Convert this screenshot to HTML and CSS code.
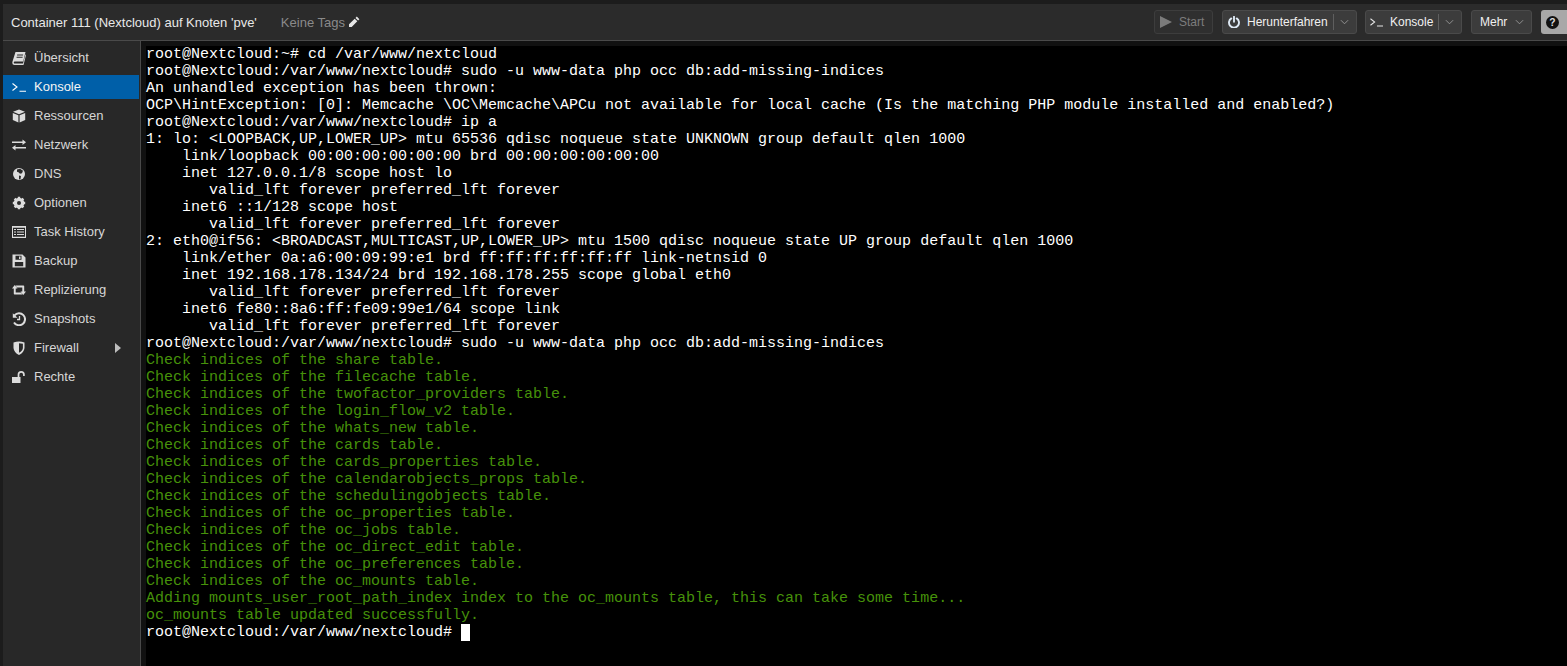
FILE: index.html
```html
<!DOCTYPE html>
<html lang="de">
<head>
<meta charset="utf-8">
<title>Container 111 (Nextcloud)</title>
<link rel="stylesheet" href="styles.css">
</head>
<body>
<div class="app">
  <header class="top">
    <span class="title">Container 111 (Nextcloud) auf Knoten 'pve'</span>
    <span class="tags">Keine Tags</span>
    <svg class="pencil" viewBox="0 0 12 12"><path d="M8.800.6l2.600 2.600-1.300 1.300-2.600-2.600zM6.700 2.700l2.600 2.600-5.600 5.600H1V8.300z" fill="#e6e6e6"/></svg>
    <div class="spacer"></div>
    <button class="btn start"><svg class="ic" viewBox="0 0 12 12"><path d="M0 0l12 6-12 6z" fill="#7b7b7b"/></svg><span>Start</span></button>
    <button class="btn power"><svg class="ic" viewBox="0 0 12 12"><path d="M3.300 2.400a5 5 0 1 0 5.400 0M6 .8v5" fill="none" stroke="#dfeaf5" stroke-width="1.900" stroke-linecap="round"/></svg><span>Herunterfahren</span><i class="sep"></i><svg class="chev" viewBox="0 0 10 6"><path d="M1 1l4 4 4-4" fill="none" stroke="#9a9a9a" stroke-width="1"/></svg></button>
    <button class="btn konsole"><svg class="ic wide" viewBox="0 0 14 10"><path d="M.5 1.500L5 5 .5 8.500M7.500 9.200h6.500" fill="none" stroke="#e6e6e6" stroke-width="1.100"/></svg><span>Konsole</span><i class="sep"></i><svg class="chev" viewBox="0 0 10 6"><path d="M1 1l4 4 4-4" fill="none" stroke="#9a9a9a" stroke-width="1"/></svg></button>
    <button class="btn mehr"><span>Mehr</span><svg class="chev" viewBox="0 0 10 6"><path d="M1 1l4 4 4-4" fill="none" stroke="#9a9a9a" stroke-width="1"/></svg></button>
    <button class="help"><svg viewBox="0 0 12 12"><circle cx="6" cy="6" r="6" fill="#111"/><text x="6" y="9.300" class="q">?</text></svg></button>
  </header>
  <div class="main">
    <nav class="side">
      <a class="item"><svg viewBox="0 0 14 14"><path fill-rule="evenodd" d="M3.500 1H13.500l-2.300 9.500H2.500a1.300 1.300 0 0 0-.3 2h8.800l2.500-9.200.5.800L11.500 14H2.500Q-.3 14 .5 10.500zM5.200 3.500l-.2 1h6l.2-1zM4.700 5.700l-.2 1h6l.2-1z" fill="#dcdcdc"/></svg><span>Übersicht</span></a>
      <a class="item active"><svg viewBox="0 0 14 10"><path d="M.5 1.500L5 5 .5 8.500M7.500 9.200h6.500" fill="none" stroke="#fff" stroke-width="1.100"/></svg><span>Konsole</span></a>
      <a class="item"><svg viewBox="0 0 14 14"><path d="M7 .5l6 2.300L7 5.200 1 2.800zM.8 4l5.600 2.300v7.200L.8 11zM13.200 4L7.600 6.300v7.200l5.600-2.500z" fill="#dcdcdc"/></svg><span>Ressourcen</span></a>
      <a class="item"><svg viewBox="0 0 14 12"><path d="M0 2.500h10.500V.5L14 3.200 10.500 6V4H0zM14 8H3.500V6L0 8.800l3.500 2.700v-2H14z" fill="#dcdcdc"/></svg><span>Netzwerk</span></a>
      <a class="item"><svg viewBox="0 0 14 14"><circle cx="7" cy="7" r="6" fill="#dcdcdc"/><path d="M5 2.500l3-.8 3 2-1 2.500-2 .5-1.500-1.500-1.500-.5zM7 8.500l2 .5-.5 3-1.500.5z" fill="#2a2a2a"/></svg><span>DNS</span></a>
      <a class="item"><svg viewBox="0 0 14 14"><circle cx="7" cy="7" r="3.800" fill="none" stroke="#dcdcdc" stroke-width="3"/><path d="M7 7V.8M7 7l4.400-4.400M7 7h6.200M7 7l4.400 4.400M7 7v6.200M7 7l-4.400 4.400M7 7H.8M7 7L2.600 2.600" stroke="#dcdcdc" stroke-width="2.400"/><circle cx="7" cy="7" r="2" fill="#2a2a2a"/></svg><span>Optionen</span></a>
      <a class="item"><svg viewBox="0 0 14 12"><path fill-rule="evenodd" d="M0 0h14v12H0zM1 1.800v9h12v-9zM2 3h2v1H2zM5 3h7v1H5zM2 5.500h2v1H2zM5 5.500h7v1H5zM2 8h2v1H2zM5 8h7v1H5z" fill="#dcdcdc"/></svg><span>Task History</span></a>
      <a class="item"><svg viewBox="0 0 14 14"><path fill-rule="evenodd" d="M.5.5h10l3 3v10H.5zM3.500 1.800v4h6v-4zM7 2.500h1.500v2.500H7zM2.800 8v4.200h8.400V8z" fill="#dcdcdc"/></svg><span>Backup</span></a>
      <a class="item"><svg viewBox="0 0 14 12"><path d="M2.750 1l2.750 3.500H3.700V8.500H9l1.500 2H2.500q-.7 0-.7-.7V4.500H0zM11.250 11L8.500 7.500h1.800V3.500H5L3.500 1.500h8q.7 0 .7.700V7.500H14z" fill="#dcdcdc"/></svg><span>Replizierung</span></a>
      <a class="item"><svg viewBox="0 0 14 14"><path d="M2.500 3.300A6 6 0 1 1 2 10.500" fill="none" stroke="#dcdcdc" stroke-width="2"/><path d="M.8 1.200L5.500 5.800H.8z" fill="#dcdcdc"/><path d="M7.500 4v3.500H5" fill="none" stroke="#dcdcdc" stroke-width="1.300"/></svg><span>Snapshots</span></a>
      <a class="item"><svg viewBox="0 0 14 14"><path fill-rule="evenodd" d="M1.500 1.500Q7-.5 12.500 1.500V7Q12 11.500 7 14 2 11.500 1.500 7zM7 2.300v9.500Q10.800 9.800 10.900 7V2.800Q9 2.300 7 2.300z" fill="#dcdcdc"/></svg><span>Firewall</span><svg class="arrow" viewBox="0 0 6 10"><path d="M0 0l6 5-6 5z" fill="#bdbdbd"/></svg></a>
      <a class="item"><svg viewBox="0 0 14 12"><path d="M0 6h8.500v6H0z" fill="#dcdcdc"/><path d="M6.500 6V3.500a2.700 2.700 0 0 1 5.400 0V5" fill="none" stroke="#dcdcdc" stroke-width="1.700"/></svg><span>Rechte</span></a>
    </nav>
    <section class="term"><pre class="screen">root@Nextcloud:~# cd /var/www/nextcloud
root@Nextcloud:/var/www/nextcloud# sudo -u www-data php occ db:add-missing-indices
An unhandled exception has been thrown:
OCP\HintException: [0]: Memcache \OC\Memcache\APCu not available for local cache (Is the matching PHP module installed and enabled?)
root@Nextcloud:/var/www/nextcloud# ip a
1: lo: &lt;LOOPBACK,UP,LOWER_UP&gt; mtu 65536 qdisc noqueue state UNKNOWN group default qlen 1000
    link/loopback 00:00:00:00:00:00 brd 00:00:00:00:00:00
    inet 127.0.0.1/8 scope host lo
       valid_lft forever preferred_lft forever
    inet6 ::1/128 scope host
       valid_lft forever preferred_lft forever
2: eth0@if56: &lt;BROADCAST,MULTICAST,UP,LOWER_UP&gt; mtu 1500 qdisc noqueue state UP group default qlen 1000
    link/ether 0a:a6:00:09:99:e1 brd ff:ff:ff:ff:ff:ff link-netnsid 0
    inet 192.168.178.134/24 brd 192.168.178.255 scope global eth0
       valid_lft forever preferred_lft forever
    inet6 fe80::8a6:ff:fe09:99e1/64 scope link
       valid_lft forever preferred_lft forever
root@Nextcloud:/var/www/nextcloud# sudo -u www-data php occ db:add-missing-indices
<span class="g">Check indices of the share table.
Check indices of the filecache table.
Check indices of the twofactor_providers table.
Check indices of the login_flow_v2 table.
Check indices of the whats_new table.
Check indices of the cards table.
Check indices of the cards_properties table.
Check indices of the calendarobjects_props table.
Check indices of the schedulingobjects table.
Check indices of the oc_properties table.
Check indices of the oc_jobs table.
Check indices of the oc_direct_edit table.
Check indices of the oc_preferences table.
Check indices of the oc_mounts table.
Adding mounts_user_root_path_index index to the oc_mounts table, this can take some time...
oc_mounts table updated successfully.
</span>root@Nextcloud:/var/www/nextcloud# <span class="cursor"> </span></pre></section>
  </div>
</div>
</body>
</html>
```
FILE: styles.css
```css
* { box-sizing: border-box; }
html, body { margin: 0; height: 100%; overflow: hidden; background: #1c1c1c; }
body { font-family: "Liberation Sans", Arial, sans-serif; font-size: 13px; color: #e0e0e0; }
.app { height: 666px; padding: 4px 0 0 3px; display: flex; flex-direction: column; }
.top { height: 37px; flex: none; display: flex; align-items: center; padding: 0 0 0 8px; background: #2b2b2b; border-bottom: 1px solid #4a4a4a; overflow: hidden; }
.title { font-size: 13px; color: #e8e8e8; }
.tags { margin-left: 24px; color: #8a8a8a; }
.pencil { width: 12px; height: 12px; margin-left: 3px; }
.spacer { flex: 1; }
.btn { height: 24px; margin: 0 9px 0 0; display: flex; align-items: center; flex: none; background: #3c3c3c; border: 1px solid #4a4a4a; border-radius: 3px; color: #f0f0f0; font: 12px "Liberation Sans", Arial, sans-serif; }
.start { width: 59px; padding: 0 0 0 5px; background: #2f2f2f; border-color: #3d3d3d; color: #7d7d7d; }
.power { width: 135px; padding: 0 0 0 5px; margin-right: 8px; }
.konsole { width: 97px; padding: 0 0 0 4px; }
.mehr { width: 61px; padding: 0 0 0 8px; }
.mehr .chev { margin-left: 8px; }
.ic { width: 12px; height: 12px; margin-right: 7px; flex: none; }
.ic.wide { width: 13px; height: 10px; margin-right: 7px; }
.sep { width: 1px; height: 16px; background: #5f5f5f; margin: 0 6px 0 5px; flex: none; }
.chev { width: 9px; height: 6px; flex: none; }
.help { width: 26px; height: 24px; flex: none; padding: 0 0 0 5px; display: flex; align-items: center; background: #a8a8a8; border: 0; border-radius: 3px 0 0 3px; }
.help svg { width: 13px; height: 13px; }
.q { font: bold 9.500px "Liberation Sans", sans-serif; fill: #ddd; text-anchor: middle; }
.main { flex: 1; display: flex; min-height: 0; }
.side { width: 138px; flex: none; padding-top: 5px; background: #282828; border-right: 1px solid #4a4a4a; display: flex; flex-direction: column; }
.item { height: 24px; margin-bottom: 5px; padding-left: 9px; display: flex; align-items: center; color: #d6d6d6; font-size: 13px; }
.item span { margin-bottom: 2px; }
.item svg:first-child { width: 14px; height: 14px; flex: none; margin-right: 8px; }
.item.active { background: #005fa8; color: #f4f4f4; margin-right: 1px; }
.arrow { width: 6px; height: 10px; margin-left: 36px; }
.term { flex: 1; min-width: 0; background: #111; padding: 5px 0 0 5px; display: flex; }
.screen { flex: 1; min-width: 0; margin: 0; background: #000; font: 15px/17px "Liberation Mono", monospace; color: #fff; white-space: pre; }
.g { color: #46920a; }
.cursor { display: inline-block; width: 9px; height: 17px; background: #fff; vertical-align: top; }
```
